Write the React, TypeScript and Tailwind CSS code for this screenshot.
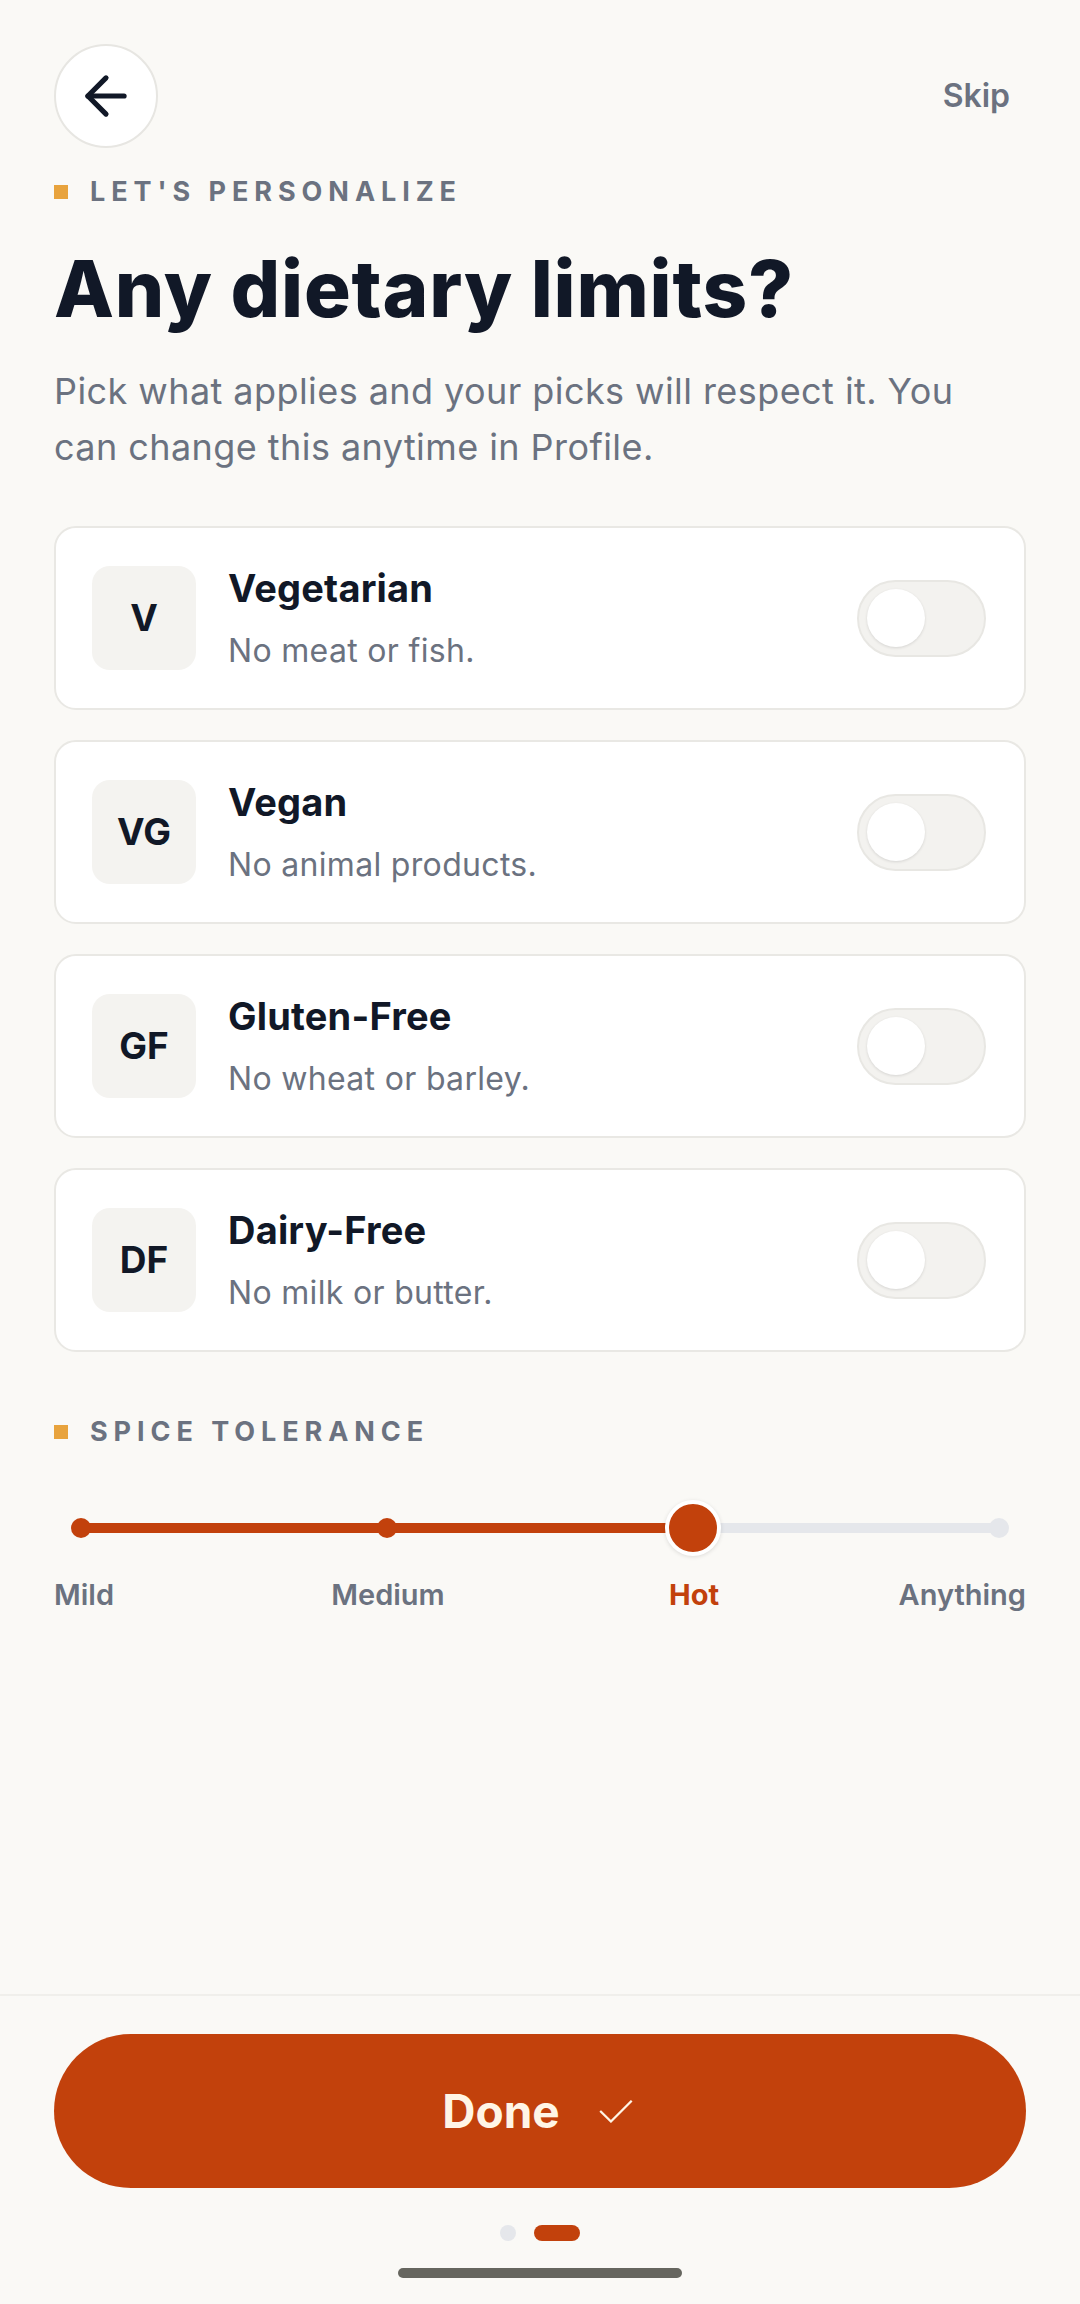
import { ArrowLeft } from "lucide-react";

interface DietRowProps {
    code: string;
    title: string;
    desc: string;
}

const diets: DietRowProps[] = [
    { code: "V", title: "Vegetarian", desc: "No meat or fish." },
    { code: "VG", title: "Vegan", desc: "No animal products." },
    { code: "GF", title: "Gluten-Free", desc: "No wheat or barley." },
    { code: "DF", title: "Dairy-Free", desc: "No milk or butter." },
];

function DietRow({ code, title, desc }: DietRowProps) {
    return (
        <div className="flex h-[184px] items-center rounded-[22px] border-2 border-[#e9e8e4] bg-white pl-[36px] pr-[38px]">
            <div className="flex h-[104px] w-[104px] items-center justify-center rounded-[18px] bg-[#f4f3f0] text-[37px] font-bold text-[#111827]">
                {code}
            </div>
            <div className="ml-[32px] flex-1">
                <p className="text-[38px] leading-[44px] font-bold tracking-[0.005em] text-[#111827]">{title}</p>
                <p className="mt-[22px] text-[32px] leading-[38px] tracking-[0.01em] text-[#6b7280]">{desc}</p>
            </div>
            {/* toggle, off */}
            <div className="flex h-[77px] w-[129px] items-center rounded-full border-2 border-[#e8e7e3] bg-[#f3f2ef] pl-[8px]">
                <div className="h-[58px] w-[58px] rounded-full bg-white shadow-[0_1px_3px_rgba(0,0,0,0.12)]" />
            </div>
        </div>
    );
}

function SectionLabel({ text }: { text: string }) {
    return (
        <div className="flex items-center gap-[22px]">
            <span className="h-[14px] w-[14px] bg-[#e8a33d]" />
            <span className="text-[27px] leading-[32px] font-bold tracking-[0.22em] text-[#6b7280]">{text}</span>
        </div>
    );
}

export default function App() {
    return (
        <div className="flex h-[2304px] w-[1080px] flex-col bg-[#faf9f6] font-['Inter',sans-serif]">
            <div className="flex-1 px-[54px]">
                {/* top bar */}
                <div className="mt-[44px] flex items-center justify-between">
                    <div className="flex h-[104px] w-[104px] items-center justify-center rounded-full border-2 border-[#e7e6e2] bg-white">
                        <ArrowLeft size={62} strokeWidth={2} className="text-[#111827]" />
                    </div>
                    <span className="pr-[16px] text-[32px] font-semibold text-[#6b7280]">Skip</span>
                </div>

                <div className="mt-[28px]">
                    <SectionLabel text="LET'S PERSONALIZE" />
                </div>

                <h1 className="mt-[37px] text-[78px] leading-[88px] font-extrabold tracking-[0.01em] text-[#111827]">
                    Any dietary limits?
                </h1>
                <p className="mt-[30px] text-[36px] leading-[56px] tracking-[0.012em] text-[#6b7280]">
                    Pick what applies and your picks will respect it. You can change this anytime in Profile.
                </p>

                <div className="mt-[51px] flex flex-col gap-[30px]">
                    {diets.map((d) => (
                        <DietRow key={d.code} {...d} />
                    ))}
                </div>

                <div className="mt-[64px]">
                    <SectionLabel text="SPICE TOLERANCE" />
                </div>

                {/* spice slider */}
                <div className="relative mx-[27px] mt-[52px] h-[56px]">
                    <div className="absolute inset-x-0 top-1/2 h-[10px] -translate-y-1/2 rounded-full bg-[#e5e7eb]" />
                    <div className="absolute left-0 top-1/2 h-[10px] w-2/3 -translate-y-1/2 bg-[#c2410c]" />
                    <span className="absolute left-0 top-1/2 h-[20px] w-[20px] -translate-x-1/2 -translate-y-1/2 rounded-full bg-[#c2410c]" />
                    <span className="absolute left-1/3 top-1/2 h-[20px] w-[20px] -translate-x-1/2 -translate-y-1/2 rounded-full bg-[#c2410c]" />
                    <span className="absolute left-full top-1/2 h-[20px] w-[20px] -translate-x-1/2 -translate-y-1/2 rounded-full bg-[#e5e7eb]" />
                    <span className="absolute left-2/3 top-1/2 h-[56px] w-[56px] -translate-x-1/2 -translate-y-1/2 rounded-full border-4 border-white bg-[#c2410c] shadow-[0_1px_4px_rgba(0,0,0,0.12)]" />
                </div>
                <div className="relative mt-[21px] h-[36px] text-[29px] leading-[36px] font-semibold text-[#6b7280]">
                    <span className="absolute left-0">Mild</span>
                    <span className="absolute left-[334px] -translate-x-1/2">Medium</span>
                    <span className="absolute left-[640px] -translate-x-1/2 font-bold text-[#c2410c]">Hot</span>
                    <span className="absolute right-0">Anything</span>
                </div>
            </div>

            {/* footer */}
            <div className="flex flex-col items-center border-t-2 border-[#f0efeb] px-[54px] pt-[38px] pb-[26px]">
                <button className="flex h-[154px] w-full items-center justify-center gap-[34px] rounded-full bg-[#c2410c] text-[46px] font-bold text-[#fff5e6]">
                    <span>Done</span>
                    <span className="text-[50px] font-extralight">✓</span>
                </button>
                <div className="mt-[37px] flex items-center gap-[18px]">
                    <span className="h-[16px] w-[16px] rounded-full bg-[#e5e7eb]" />
                    <span className="h-[16px] w-[46px] rounded-full bg-[#c2410c]" />
                </div>
                <div className="mt-[27px] h-[10px] w-[284px] rounded-full bg-[#66665f]" />
            </div>
        </div>
    );
}
